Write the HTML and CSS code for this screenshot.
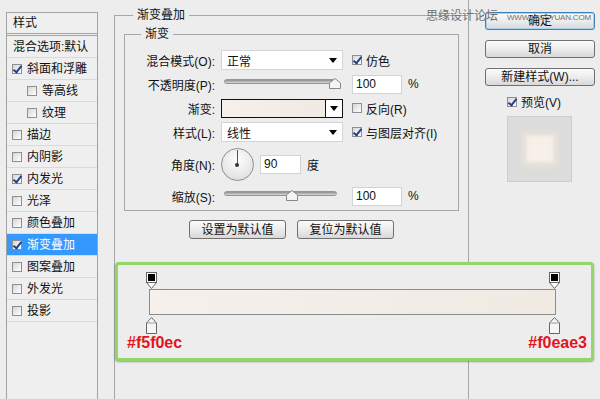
FILE: index.html
```html
<!DOCTYPE html>
<html lang="zh-CN">
<head>
    <meta charset="UTF-8">
    <meta name="viewport" content="width=device-width, initial-scale=1.0">
    <title>图层样式 - 渐变叠加</title>
    <link rel="stylesheet" href="styles.css">
</head>
<body>
    <div class="dialog">
        <ul class="style-list">
            <li class="list-head">样式</li>
            <li class="list-blend">混合选项:默认</li>
            <li><span class="cb on"></span>斜面和浮雕</li>
            <li class="sub"><span class="cb"></span>等高线</li>
            <li class="sub"><span class="cb"></span>纹理</li>
            <li><span class="cb"></span>描边</li>
            <li><span class="cb"></span>内阴影</li>
            <li><span class="cb on"></span>内发光</li>
            <li><span class="cb"></span>光泽</li>
            <li><span class="cb"></span>颜色叠加</li>
            <li class="selected"><span class="cb on"></span>渐变叠加</li>
            <li><span class="cb"></span>图案叠加</li>
            <li><span class="cb"></span>外发光</li>
            <li><span class="cb"></span>投影</li>
        </ul>

        <div class="main">
            <fieldset class="group outer">
                <legend>渐变叠加</legend>
                <fieldset class="group inner">
                    <legend>渐变</legend>
                    <div class="rows">
                        <div class="row">
                            <span class="lbl">混合模式(O):</span>
                            <div class="select"><span>正常</span><i class="arrow"></i></div>
                            <label class="check"><span class="cb on"></span>仿色</label>
                        </div>
                        <div class="row">
                            <span class="lbl">不透明度(P):</span>
                            <div class="slider">
                                <div class="track"></div>
                                <svg class="thumb" style="left: calc(100% - 8px);" width="12" height="11" viewBox="0 0 12 11"><polygon points="6,0.5 11.5,5 11.5,10.5 0.5,10.5 0.5,5" fill="#f4f4f4" stroke="#888"/></svg>
                            </div>
                            <div class="num">100</div>
                            <span class="unit">%</span>
                        </div>
                        <div class="row">
                            <span class="lbl">渐变:</span>
                            <div class="grad-pick">
                                <div class="swatch"></div>
                                <div class="pick-btn"><i class="arrow"></i></div>
                            </div>
                            <label class="check"><span class="cb"></span>反向(R)</label>
                        </div>
                        <div class="row">
                            <span class="lbl">样式(L):</span>
                            <div class="select"><span>线性</span><i class="arrow"></i></div>
                            <label class="check"><span class="cb on"></span>与图层对齐(I)</label>
                        </div>
                        <div class="row row-angle">
                            <span class="lbl">角度(N):</span>
                            <div class="dial"></div>
                            <div class="num num-angle">90</div>
                            <span class="unit">度</span>
                        </div>
                        <div class="row">
                            <span class="lbl">缩放(S):</span>
                            <div class="slider">
                                <div class="track"></div>
                                <svg class="thumb" style="left: calc(60% - 6px);" width="12" height="11" viewBox="0 0 12 11"><polygon points="6,0.5 11.5,5 11.5,10.5 0.5,10.5 0.5,5" fill="#f4f4f4" stroke="#888"/></svg>
                            </div>
                            <div class="num">100</div>
                            <span class="unit">%</span>
                        </div>
                    </div>
                </fieldset>
                <div class="defaults">
                    <button class="btn">设置为默认值</button>
                    <button class="btn">复位为默认值</button>
                </div>
            </fieldset>
        </div>

        <div class="side">
            <button class="btn default">确定</button>
            <button class="btn">取消</button>
            <button class="btn">新建样式(W)...</button>
            <label class="check preview-check"><span class="cb on"></span>预览(V)</label>
            <div class="preview"><div class="preview-swatch"></div></div>
        </div>
    </div>

    <div class="watermark">
        <span class="cn">思缘设计论坛</span>
        <span class="url">WWW.MISSYUAN.COM</span>
    </div>

    <div class="annot">
        <div class="marks">
            <svg width="11" height="17" viewBox="0 0 11 17"><polygon points="0.5,10.5 10.5,10.5 5.5,16.5" fill="#fff" stroke="#666"/><rect x="0.5" y="0.5" width="10" height="10" fill="#fff" stroke="#666"/><rect x="2" y="2" width="7" height="7" fill="#000"/></svg>
            <svg width="11" height="17" viewBox="0 0 11 17"><polygon points="0.5,10.5 10.5,10.5 5.5,16.5" fill="#fff" stroke="#666"/><rect x="0.5" y="0.5" width="10" height="10" fill="#fff" stroke="#666"/><rect x="2" y="2" width="7" height="7" fill="#000"/></svg>
        </div>
        <div class="grad-bar"></div>
        <div class="marks marks-bottom">
            <svg width="11" height="17" viewBox="0 0 11 17"><polygon points="5.5,0.5 10.5,6 10.5,16.5 0.5,16.5 0.5,6" fill="#f6f6f6" stroke="#666"/><line x1="0.5" y1="6" x2="10.5" y2="6" stroke="#999"/></svg>
            <svg width="11" height="17" viewBox="0 0 11 17"><polygon points="5.5,0.5 10.5,6 10.5,16.5 0.5,16.5 0.5,6" fill="#f6f6f6" stroke="#666"/><line x1="0.5" y1="6" x2="10.5" y2="6" stroke="#999"/></svg>
        </div>
        <div class="hex">
            <span>#f5f0ec</span>
            <span>#f0eae3</span>
        </div>
    </div>
</body>
</html>
```

FILE: styles.css
```css
* {
    box-sizing: border-box;
}
body {
    margin: 0;
    width: 600px;
    height: 399px;
    overflow: hidden;
    position: relative;
    background: #ededed;
    font-family: "Liberation Sans", "Noto Sans CJK SC", sans-serif;
    font-size: 12px;
    color: #111;
}
.dialog {
    display: flex;
    height: 399px;
}

/* left list of styles */
.style-list {
    list-style: none;
    margin: 12px 0 0 6px;
    padding: 0;
    width: 92px;
    height: 387px;
    flex-shrink: 0;
    border: 1px solid #a3a3a3;
    border-bottom: none;
    background: #efefef;
}
.style-list li {
    display: flex;
    align-items: center;
    height: 22px;
    padding-left: 5px;
    border-bottom: 1px solid #dadada;
    white-space: nowrap;
    line-height: 14px;
}
.style-list li.list-head {
    height: 23px;
    padding-left: 6px;
    border-bottom: 3px double #a3a3a3;
}
.style-list li.list-blend {
    padding-left: 6px;
}
.style-list li.sub {
    padding-left: 20px;
}
.style-list li.selected {
    background: #3399ff;
    color: #fff;
}

/* checkbox */
.cb {
    width: 10px;
    height: 10px;
    flex-shrink: 0;
    margin-right: 5px;
    position: relative;
    border: 1px solid #8f8f8f;
    background: linear-gradient(135deg, #d6d6d6, #ffffff);
}
.cb.on::after {
    content: "";
    position: absolute;
    left: 2px;
    top: -1px;
    width: 3px;
    height: 7px;
    border: solid #24408f;
    border-width: 0 2px 2px 0;
    transform: rotate(38deg);
}

/* group boxes */
.main {
    width: 370px;
    padding-left: 16px;
    flex-shrink: 0;
}
.group {
    margin: 0;
    padding: 0;
    min-width: 0;
    border: 1px solid #a6a6a6;
}
.group legend {
    padding: 0 4px;
    line-height: 16px;
    font-size: 12px;
}
.outer {
    margin-top: 7px;
    height: 392px;
    border-right: none;
    border-bottom: none;
}
.outer > legend {
    margin-left: 18px;
}
.inner {
    margin: 3px 9px 0;
}
.inner > legend {
    margin-left: 16px;
}
.rows {
    display: flex;
    flex-direction: column;
    gap: 4px;
    padding: 8px 0 4px;
}
.row {
    display: flex;
    align-items: center;
    height: 20px;
}
.row-angle {
    height: 36px;
}
.lbl {
    width: 90px;
    margin-right: 6px;
    text-align: right;
    white-space: nowrap;
}
.select {
    width: 122px;
    height: 20px;
    display: flex;
    align-items: center;
    justify-content: space-between;
    padding: 0 5px 0 5px;
    background: #fff;
    border: 1px solid #d4d4d4;
}
.arrow {
    width: 0;
    height: 0;
    border-left: 4px solid transparent;
    border-right: 4px solid transparent;
    border-top: 5px solid #000;
}
.check {
    display: flex;
    align-items: center;
    margin-left: 9px;
    white-space: nowrap;
}
.check .cb {
    margin-right: 4px;
}
.num {
    width: 50px;
    height: 19px;
    margin-left: 9px;
    padding-left: 3px;
    line-height: 17px;
    background: #fff;
    border: 1px solid #d3d3d3;
}
.num-angle {
    width: 41px;
    margin-left: 6px;
}
.unit {
    margin-left: 6px;
}

/* sliders */
.slider {
    position: relative;
    width: 113px;
    height: 20px;
    margin: 0 6px 0 3px;
    padding-top: 5px;
}
.track {
    height: 5px;
    border: 1px solid #959595;
    border-radius: 3px;
    background: linear-gradient(#8e8e8e, #d8d8d8);
}
.thumb {
    position: absolute;
    top: 4px;
}

/* gradient picker */
.grad-pick {
    width: 122px;
    height: 19px;
    display: flex;
    border: 1px solid #111;
}
.swatch {
    flex: 1;
    background: linear-gradient(90deg, #f5f0ec, #f0eae3);
}
.pick-btn {
    width: 17px;
    display: flex;
    align-items: center;
    justify-content: center;
    border-left: 1px solid #111;
    background: #fff;
}

/* angle dial */
.dial {
    width: 33px;
    height: 33px;
    flex-shrink: 0;
    position: relative;
    border-radius: 50%;
    border: 1px solid #8c8c8c;
    background: radial-gradient(circle at 50% 35%, #fdfdfd, #e4e4e4 70%, #d4d4d4);
}
.dial::before {
    content: "";
    position: absolute;
    left: 15px;
    top: 1px;
    width: 1px;
    height: 15px;
    background: #555;
}
.dial::after {
    content: "";
    position: absolute;
    left: 13px;
    top: 14px;
    width: 4px;
    height: 4px;
    border-radius: 50%;
    background: #333;
}

/* buttons */
.btn {
    height: 19px;
    padding: 0;
    font-family: inherit;
    font-size: 12px;
    line-height: 16px;
    color: #111;
    border: 1px solid #707070;
    border-radius: 3px;
    background: linear-gradient(#fbfbfb, #ececec 50%, #d8d8d8);
}
.defaults {
    display: flex;
    justify-content: center;
    gap: 11px;
    margin-top: 9px;
}
.defaults .btn {
    width: 97px;
}

/* right column */
.side {
    flex: 1;
    display: flex;
    flex-direction: column;
    align-items: flex-start;
    padding: 12px 0 0 16px;
    border-left: 1px solid #a6a6a6;
}
.side .btn {
    width: 110px;
    height: 18px;
    margin-bottom: 10px;
}
.side .btn.default {
    border-color: #3d7fb5;
    box-shadow: inset 0 0 0 1px #a8d4f3;
}
.preview-check {
    height: 17px;
    margin: -3px 0 0 22px;
}
.preview {
    width: 65px;
    height: 66px;
    margin: 6px 0 0 22px;
    display: flex;
    align-items: center;
    justify-content: center;
    background: #dcdcdc;
    border: 1px solid #cdcdcd;
}
.preview-swatch {
    width: 26px;
    height: 26px;
    background: #f6f0e9;
    box-shadow: 0 0 6px 4px #ede3d8;
    filter: blur(1.5px);
}

/* watermark over the top */
.watermark {
    position: absolute;
    top: 9px;
    left: 426px;
    display: flex;
    align-items: center;
    gap: 9px;
    color: #707070;
}
.watermark .cn {
    font-size: 12px;
    line-height: 14px;
}
.watermark .url {
    font-size: 8px;
    letter-spacing: -0.2px;
    margin-top: 2px;
}

/* green annotation with the gradient stops */
.annot {
    position: absolute;
    left: 115px;
    top: 262px;
    width: 479px;
    height: 99px;
    padding: 7px 35px 0 31px;
    background: #ededed;
    border: 3px solid #93d76a;
    border-radius: 4px;
    box-shadow: 0 1px 2px rgba(0, 0, 0, 0.35);
}
.marks {
    display: flex;
    justify-content: space-between;
    height: 17px;
    margin: 0 -4px 0 -3px;
}
.marks svg {
    display: block;
}
.marks-bottom {
    margin-top: 2px;
}
.grad-bar {
    height: 26px;
    border: 1px solid #8c8c8c;
    background: linear-gradient(90deg, #f5f0ec, #f0eae3);
}
.hex {
    display: flex;
    justify-content: space-between;
    margin: 0 -31px 0 -22px;
    font-size: 16px;
    line-height: 18px;
    font-weight: bold;
    color: #e3141d;
}
```
